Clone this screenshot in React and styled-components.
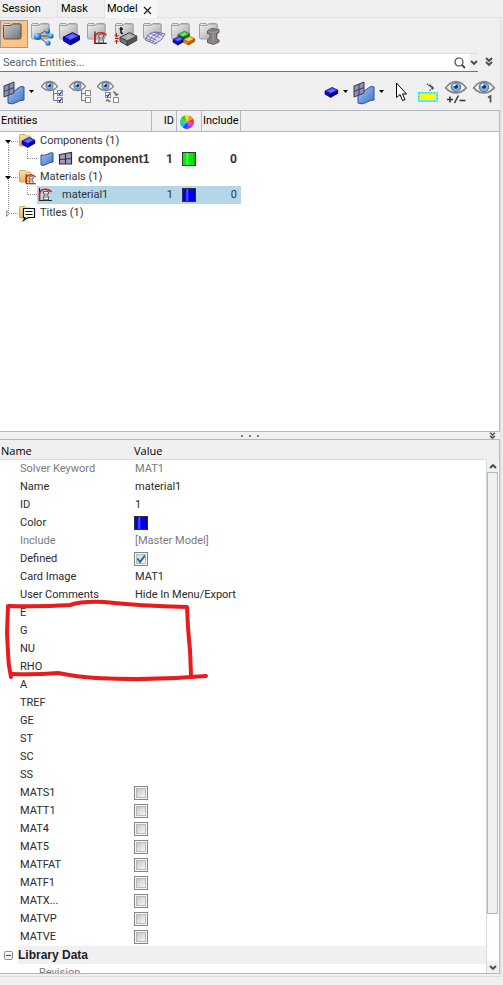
import { useState } from 'react'
import styled, { createGlobalStyle } from 'styled-components'

const Global = createGlobalStyle`
  * { box-sizing: border-box; }
  body {
    margin: 0;
    background: #f0f0f0;
    color: #1e1e1e;
    font-family: Roboto, "Liberation Sans", sans-serif;
    font-size: 11px;
    line-height: 18px;
  }
  button, input { font: inherit; color: inherit; }
  svg { display: block; flex: none; overflow: visible; }
`

const Page = styled.div`
  display: flex;
  flex-direction: column;
  height: 100vh;
  padding: 0 1px 8px 0;
`
const Tabs = styled.div`
  display: flex;
  height: 18px;
`
const Tab = styled.button`
  border: 0;
  border-right: ${p => p.$active ? 0 : 1}px solid #e2e2e2;
  border-bottom: 1px solid ${p => p.$active ? '#f8f8f8' : '#e2e2e2'};
  background: ${p => p.$active ? '#f8f8f8' : 'none'};
  min-width: ${p => p.$w}px;
  padding: 0 0 0 ${p => p.$pad || 2}px;
  color: #000;
  line-height: 17px;
  text-align: left;
`
const ActiveTab = styled.div`
  display: flex;
  align-items: center;
  background: #f8f8f8;
  padding-right: 4px;
`
const CloseButton = styled.button`
  border: 0;
  background: none;
  padding: 2px 1px 0;
`
const TabSpace = styled.div`
  flex: 1;
  border-bottom: 1px solid #e2e2e2;
`
const Frame = styled.div`
  flex: 1;
  min-height: 0;
  display: flex;
  flex-direction: column;
  border-right: 2px solid #e4e4e4;
  border-bottom: 1px solid #dcdcdc;
  padding-bottom: 2px;
`
const ViewBar = styled.div`
  display: flex;
  height: 35px;
  padding-top: 2px;
`
const ViewButton = styled.button`
  width: 28px;
  height: 28px;
  padding: 0;
  border: 1px solid ${p => p.$on ? '#9a9a9a' : 'transparent'};
  background: ${p => p.$on ? '#ffc483' : 'none'};
`
const SearchRow = styled.div`
  display: flex;
  height: 19px;
`
const SearchField = styled.div`
  flex: 1;
  display: flex;
  align-items: center;
  background: #fff;
  border-top: 1px solid #dcdcdc;
  border-bottom: 1px solid #757575;
`
const SearchInput = styled.input`
  flex: 1;
  min-width: 0;
  border: 0;
  outline: 0;
  background: none;
  padding: 0 3px;
  line-height: 16px;
  &::placeholder { color: #606060; opacity: 1; }
`
const SmallButton = styled.button`
  display: flex;
  align-items: center;
  justify-content: center;
  border: 0;
  padding: 0;
  width: ${p => p.$w}px;
  height: 17px;
  background: ${p => p.$filled ? '#f0f0f0' : 'none'};
`
const ToolBar = styled.div`
  display: flex;
  align-items: center;
  justify-content: space-between;
  height: 38px;
  padding: 2px 4px 0 2px;
`
const ToolGroup = styled.div`
  display: flex;
  align-items: center;
  gap: ${p => p.$gap || 4}px;
`
const ToolButton = styled.button`
  display: flex;
  align-items: center;
  justify-content: center;
  width: ${p => p.$w || 24}px;
  height: 26px;
  border: 0;
  padding: 0;
  background: none;
`
const TreePane = styled.div`
  flex: none;
  height: 322px;
  background: #fff;
  border: 1px solid #b0b8c0;
  border-left: 0;
`
const TreeTable = styled.table`
  width: 100%;
  table-layout: fixed;
  border-spacing: 0;
  font-size: 11px;
`
const TreeHead = styled.th`
  width: ${p => p.$w ? p.$w + 'px' : 'auto'};
  height: 21px;
  padding: 0 2px 0 1px;
  background: #f0f0f0;
  border-bottom: 1px solid #b0b8c0;
  border-right: ${p => p.$w ? '1px solid #b0b8c0' : '0'};
  color: #000;
  font-weight: normal;
  text-align: ${p => p.$align || 'left'};
`
const TreeCell = styled.td`
  height: 18px;
  padding: ${p => p.$align === 'right' ? '0 4px' : '0'};
  background: ${p => p.$selected ? '#b4d6e9' : 'none'};
  color: #333;
  font-size: ${p => p.$bold ? 12 : 11}px;
  font-weight: ${p => p.$bold ? 'bold' : 'normal'};
  text-align: ${p => p.$align || 'left'};
`
const TreeName = styled.div`
  display: flex;
  height: 18px;
`
const TreeLabel = styled.div`
  flex: 1;
  display: flex;
  align-items: center;
  gap: ${p => p.$gap || 4}px;
  background: ${p => p.$selected ? '#b4d6e9' : 'none'};
  font-family: ${p => p.$bold ? '"Liberation Sans", sans-serif' : 'inherit'};
  font-size: ${p => p.$bold ? 12 : 11}px;
  font-weight: ${p => p.$bold ? 'bold' : 'normal'};
  white-space: nowrap;
`
const Swatch = styled.span`
  display: block;
  width: 14px;
  height: 14px;
  margin-left: ${p => p.$inset || 0}px;
  border: 1px solid #333;
  background: linear-gradient(90deg, ${p => p.$color} 20%, ${p => p.$light} 35%, ${p => p.$color} 50%, ${p => p.$color} 80%, ${p => p.$dark});
`
const Splitter = styled.div`
  display: grid;
  grid-template-columns: 1fr auto 1fr;
  align-items: center;
  flex: none;
  height: 7px;
`
const Dots = styled.div`
  display: flex;
  gap: 6px;
  grid-column: 2;
`
const Dot = styled.i`
  width: 2px;
  height: 2px;
  background: #7a7a7a;
`
const SplitButton = styled.button`
  justify-self: end;
  border: 0;
  padding: 0 4px 0 0;
  background: none;
`
const PropPane = styled.div`
  flex: 1;
  min-height: 0;
  display: flex;
  overflow: hidden;
  border: 1px solid #b0b8c0;
  border-left: 0;
`
const PropBody = styled.div`
  position: relative;
  flex: 1;
  min-width: 0;
  height: 100%;
  overflow: hidden;
  background: #fff;
`
const PropTable = styled.table`
  width: 100%;
  table-layout: fixed;
  border-spacing: 0;
  font-size: 11px;
`
const PropHead = styled.th`
  width: ${p => p.$w ? p.$w + 'px' : 'auto'};
  height: 20px;
  padding: 3px 0 0 1px;
  line-height: 16px;
  background: #f0f0f0;
  border-bottom: 1px solid #d3dde4;
  color: #000;
  font-family: "Open Sans", sans-serif;
  font-weight: normal;
  text-align: left;
`
const PropCell = styled.td`
  height: 18px;
  padding: 0 0 0 ${p => p.$pad}px;
  color: ${p => p.$dim ? '#7a7a7a' : '#2a2a2a'};
  white-space: nowrap;
`
const GroupCell = styled.td`
  height: 18px;
  padding: 0;
  background: #f0f0f0;
  font-family: "Liberation Sans", sans-serif;
  font-size: 12px;
  font-weight: bold;
`
const GroupTitle = styled.div`
  display: flex;
`
const Expander = styled.button`
  display: flex;
  align-items: center;
  justify-content: center;
  width: 18px;
  height: 18px;
  border: 0;
  padding: 0 1px 0 0;
  background: #fff;
`
const Check = styled.input`
  appearance: none;
  display: block;
  width: 14px;
  height: 14px;
  margin: 0;
  border: 1px solid #868686;
  box-shadow: inset 0 0 0 1px #f6f6f6, inset 0 0 0 2px #b5b9be;
  background: linear-gradient(135deg, #b4bac4, #f4f4f4 80%);
  &:checked {
    background: url("data:image/svg+xml,%3Csvg xmlns='http://www.w3.org/2000/svg' viewBox='0 0 12 12'%3E%3Cpath d='M2.5 5.5L5 9L10 2.5' fill='none' stroke='%231b6f9c' stroke-width='2'/%3E%3C/svg%3E"),
      linear-gradient(135deg, #c5cad2, #f8f8f8 80%);
  }
`
const ScrollBar = styled.div`
  display: flex;
  flex-direction: column;
  width: 13px;
  margin-top: 20px;
  padding-right: 1px;
  background: #fff;
  border-left: 1px solid #d3dbe2;
`
const ScrollThumb = styled.div`
  height: 442px;
  border: 1px solid #b0b8c0;
  background: #f0f0f0;
`
const ScrollSpace = styled.div`
  flex: 1;
`
const ScrollButton = styled.button`
  display: flex;
  align-items: center;
  justify-content: center;
  flex: none;
  height: 12px;
  border: 0;
  padding: 0;
  background: #f0f0f0;
`
// pen mark laid over the rows E .. RHO
const Marker = styled.svg`
  position: absolute;
  left: 0;
  top: 155px;
  pointer-events: none;
`
const WheelIcon = styled.svg`
  margin: 2px 0 0 2px;
`
const HiddenDefs = styled.svg`
  position: absolute;
`

const Defs = () => (
  <HiddenDefs width="0" height="0">
    <defs>
      <linearGradient id="steel" x1="0" y1="0" x2="1" y2="1">
        <stop offset="0" stopColor="#f4f4f4" /><stop offset=".5" stopColor="#cacaca" /><stop offset="1" stopColor="#a0a0a0" />
      </linearGradient>
      <linearGradient id="steelDark" x1="0" y1="0" x2="1" y2="1">
        <stop offset="0" stopColor="#d0d0d0" /><stop offset="1" stopColor="#6f6f6f" />
      </linearGradient>
      <linearGradient id="surf" x1="0" y1="0" x2="1" y2="1">
        <stop offset="0" stopColor="#a4c4f0" /><stop offset="1" stopColor="#4174c4" />
      </linearGradient>
      <linearGradient id="gold" x1="0" y1="0" x2="0" y2="1">
        <stop offset="0" stopColor="#fbe3a4" /><stop offset="1" stopColor="#e4b45c" />
      </linearGradient>
      <radialGradient id="ball" cx=".35" cy=".3" r=".8">
        <stop offset="0" stopColor="#b8e4ff" /><stop offset=".5" stopColor="#2a8ae6" /><stop offset="1" stopColor="#0b3f98" />
      </radialGradient>
    </defs>
  </HiddenDefs>
)

const Folder = ({ dark }) => (
  <g>
    <path d="M3.500 17V5q0-1.500 1.500-1.500H10l1.500 2L13 3.500H19.500q1.500 0 1.500 1.500V16"
      fill="url(#steel)" stroke="#8a8a8a" strokeWidth=".8" />
    <path d="M3.500 6.500q0-1 1-1H11l1.500-1.500H20q1 0 1 1V17.500q0 1.500-1.500 1.500H5q-1.500 0-1.500-1.500Z"
      fill={dark ? 'url(#steelDark)' : 'url(#steel)'} stroke={dark ? '#555' : '#a0a0a0'} />
  </g>
)

const Cube = ({ x = 0, y = 0, s = 1, top = '#4a4aff', left = '#0a0ad0', right = '#0000a0', line = '#00007c' }) => (
  <g transform={`translate(${x} ${y}) scale(${s})`} stroke={line} strokeWidth=".9" strokeLinejoin="round">
    <path d="M0 5v4l7 4V8.500Z" fill={left} />
    <path d="M16 4v4l-9 5V8.500Z" fill={right} />
    <path d="M0 5L9 0.500L16 4L7 8.500Z" fill={top} />
    <path d="M4 5L9 2.500L12.500 4.200L7.200 6.800Z" fill="#fff" fillOpacity=".22" stroke="none" />
  </g>
)

const Curve = ({ x = 0, y = 0, s = 1 }) => (
  <g transform={`translate(${x} ${y}) scale(${s})`} fill="none">
    <path d="M1.500 0V12.500H14" stroke="#222" strokeWidth="1.200" />
    <path d="M1.500 12V6Q2 1.500 7 1.200Q11 1 13.500 4" stroke="#e51414" strokeWidth="1.600" />
    <path d="M5.500 3.500h5v2.500l-1.500 1.300 1.500 1.300V12h-5V8.600L7 7.300 5.500 6Z" fill="#b4b4b4" stroke="#444" strokeWidth=".8" />
    <path d="M6.500 4.500h3M6.500 10.500h3" stroke="#f8f8f8" />
  </g>
)

const viewIcons = {
  'Model view': <Folder dark />,
  'Assembly': <>
    <Folder />
    <path d="M9 16L17 11M9 16H20M9 16L19 23" stroke="#555" />
    <circle cx="9.500" cy="16.500" r="3.600" fill="url(#ball)" />
    <circle cx="19.500" cy="11" r="2.600" fill="url(#ball)" />
    <circle cx="23" cy="16" r="2.600" fill="url(#ball)" />
    <circle cx="20" cy="23" r="2.600" fill="url(#ball)" />
  </>,
  'Components': <><Folder /><Cube x="7.500" y="12" /></>,
  'Materials': <><Folder /><Curve x="9.500" y="11.500" s=".95" /></>,
  'Properties': <>
    <Folder />
    <path d="M9 7v5q0 1.500 2 1.500M7.500 9h3.500" fill="none" stroke="#111" strokeWidth="1.500" />
    <path d="M4.500 13v4M2.500 15l2 2L6.500 15M3 18.500h3.500M4.500 20v4M2.500 22l2-2L6.500 22" stroke="#c01818" fill="none" />
    <Cube x="8" y="12" s="1.050" top="#a6a6a6" left="#747474" right="#585858" line="#3c3c3c" />
  </>,
  'Mesh': <>
    <Folder />
    <path d="M5.500 20Q8 12 16 12L25 14Q23 20 15 24Z" fill="#e8e8f8" fillOpacity=".75" stroke="#6868ac" />
    <path d="M7.500 16l9.500 4.500M10.500 13.500l9 4M14 12l9 4M9.500 21.500Q11 14 20 13M12.500 22.500Q15 15 23 13.500M6.500 18.500l9.500 4" fill="none" stroke="#6868ac" strokeWidth=".8" />
  </>,
  'Blocks': <>
    <Folder />
    <Cube x="10" y="11" s=".72" top="#4adc4a" left="#14a414" right="#0c7c0c" line="#0a640a" />
    <Cube x="5" y="16" s=".7" />
    <Cube x="15.500" y="16" s=".7" top="#ffb84c" left="#e88c14" right="#b86404" line="#8c4c04" />
  </>,
  'Sections': <>
    <Folder />
    <path d="M11.500 11l4-2.500 7.500 1v3l-2.500 1.500v4.500l2.500 1.500v2L17.500 24.500 11.500 22.500v-3l2.500-1.500v-4L11.500 13.500Z" fill="#8c8282" stroke="#625a5a" />
    <path d="M12 11.500l5.500 1.500 5-2.500M17.500 13.500v10" fill="none" stroke="#aca2a2" strokeWidth=".8" />
  </>,
}

const Surface = () => (
  <svg width="22" height="23" viewBox="0 0 22 23">
    <path d="M5 9q5 3 9-1t7-2v13q-4 0-8 2.500T5 22Z" fill="url(#surf)" stroke="#27519c" />
    <path d="M1 5L11 1v11L1 16Z" fill="#8f8fb4" stroke="#3a3a5c" />
    <path d="M6 3v11M1 10.500L11 6.500" stroke="#3a3a5c" />
  </svg>
)

const Eye = () => (
  <g>
    <path d="M.5 5.500Q4 .5 8.500 .5T16.500 5.500Q13 9.500 8.500 9.500T.5 5.500Z" fill="#f2f2f2" stroke="#858585" strokeWidth="1.300" />
    <circle cx="8.500" cy="4.800" r="3.700" fill="#86ace2" stroke="#54709c" strokeWidth=".8" />
    <circle cx="8.500" cy="4.500" r="1.600" fill="#173468" />
    <circle cx="7.300" cy="3.300" r=".9" fill="#fff" />
  </g>
)

const Box = ({ x, y, on }) => (
  <g>
    <rect x={x} y={y} width="5" height="5" fill="#fff" stroke="#8c8c8c" />
    {on && <path d={`M${x + 1} ${y + 2.5}l1.200 1.500 2-3`} fill="none" stroke="#0a1ec8" strokeWidth="1.200" />}
  </g>
)

const EyeTree = ({ on }) => (
  <svg width="23" height="23" viewBox="0 0 23 23">
    <Eye />
    <path d="M12.500 9v10.500H16M12.500 12.500H16" fill="none" stroke="#777" />
    <Box x={16.5} y={9.5} on={on} />
    <Box x={16.5} y={16.5} on={on} />
  </svg>
)

const EyeSwap = () => (
  <svg width="23" height="23" viewBox="0 0 23 23">
    <Eye />
    <Box x={8.5} y={11.5} on />
    <Box x={16.5} y={16.5} />
    <path d="M16 11q3 0 3.500 3M17.500 12.500l2 2 2-2M13.500 20.500q-2.500 0-3-1.500M9 20l1.500-1.500 2 1.500" fill="none" stroke="#777" strokeWidth="1.300" />
  </svg>
)

const BigEye = ({ children }) => (
  <svg width="22" height="23" viewBox="0 0 22 23">
    <g transform="scale(1.290 1.250)"><Eye /></g>
    {children}
  </svg>
)

const Caret = () => <svg width="6" height="4"><path d="M0 0h5L2.500 3Z" fill="#000" /></svg>
const CaretButton = ({ label }) => <ToolButton $w={8} aria-label={label}><Caret /></ToolButton>

const Chevrons = ({ double, up, small }) => (
  <svg width={small ? 7 : 8} height={double ? (small ? 7 : 9) : 5} viewBox={double ? '0 0 8 9' : '0 0 8 5'}>
    <path d={up ? 'M1 4L4 1.200L7 4' : 'M1 1L4 3.800L7 1'} fill="none" stroke="#505050" strokeWidth="2" />
    {double && <path d="M1 5L4 7.800L7 5" fill="none" stroke="#505050" strokeWidth="2" />}
  </svg>
)

const Branch = ({ first, last, closed }) => (
  <svg width="19" height="18">
    <path d={`M8.500 ${first ? 9 : 0}V${last ? 9 : 18}`} stroke="#909090" strokeDasharray="1 1" />
    <path d="M9 9.500H19" stroke="#909090" strokeDasharray="1 1" />
    {closed
      ? <path d="M6.500 6.500v6L9.500 9.500Z" fill="#ddd" stroke="#999" />
      : <path d="M5 8h6L8 11.500Z" fill="#000" />}
  </svg>
)
const Twig = () => (
  <svg width="37" height="18">
    <path d="M8.500 0V18M27.500 0V9M28 8.500H37" fill="none" stroke="#909090" strokeDasharray="1 1" />
  </svg>
)

const GoldFolder = ({ children }) => (
  <svg width="17" height="18" viewBox="0 0 17 18">
    <path d="M.5 13V3.500q0-1 1-1H6L7.500 4H11q1 0 1 1v8q0 1-1 1H1.500q-1 0-1-1Z" fill="url(#gold)" stroke="#c4984c" strokeWidth=".8" />
    {children}
  </svg>
)

const Wheel = () => (
  <WheelIcon width="14" height="14" viewBox="-7 -7 14 14">
    {['#ff3030', '#ff30c0', '#8a40f0', '#3040ff', '#20b8f0', '#20d890', '#30d020', '#f0e020', '#ff9020'].map((color, i) => (
      <path key={color} d="M0 0L0-7A7 7 0 0 1 4.600-5.300Z" fill={color} transform={`rotate(${i * 40 + 60})`} />
    ))}
  </WheelIcon>
)

const blue = { $color: '#0000f0', $light: '#5c5cff', $dark: '#000090' }
const green = { $color: '#0ce80c', $light: '#5cff5c', $dark: '#08a808' }

const props = [
  ['Solver Keyword', 'MAT1', true],
  ['Name', 'material1'],
  ['ID', '1'],
  ['Color', 'swatch'],
  ['Include', '[Master Model]', true],
  ['Defined', true],
  ['Card Image', 'MAT1'],
  ['User Comments', 'Hide In Menu/Export'],
  ...['E', 'G', 'NU', 'RHO', 'A', 'TREF', 'GE', 'ST', 'SC', 'SS'].map(n => [n, '']),
  ...['MATS1', 'MATT1', 'MAT4', 'MAT5', 'MATFAT', 'MATF1', 'MATX...', 'MATVP', 'MATVE'].map(n => [n, false]),
]

function PropRow({ name, value, dim }) {
  const isCheck = typeof value === 'boolean'
  const id = 'prop-' + name
  return (
    <tr>
      <PropCell $pad={20} $dim={dim}>{isCheck ? <label htmlFor={id}>{name}</label> : name}</PropCell>
      <PropCell $pad={isCheck || value === 'swatch' ? 1 : 2} $dim={dim}>
        {isCheck && <Check id={id} type="checkbox" defaultChecked={value} />}
        {value === 'swatch' && <Swatch {...blue} />}
        {!isCheck && value !== 'swatch' && value}
      </PropCell>
    </tr>
  )
}

export default function App() {
  const [view, setView] = useState('Model view')

  return (
    <Page>
      <Global />
      <Defs />
      <Tabs>
        <Tab $w={58}>Session</Tab>
        <Tab $w={47} $pad={3}>Mask</Tab>
        <ActiveTab>
          <Tab $active $w={37}>Model</Tab>
          <CloseButton aria-label="Close Model">
            <svg width="9" height="9"><path d="M1 1l7 7M8 1L1 8" stroke="#222" strokeWidth="1.300" /></svg>
          </CloseButton>
        </ActiveTab>
        <TabSpace />
      </Tabs>
      <Frame>
        <ViewBar>
          {Object.keys(viewIcons).map(name => (
            <ViewButton key={name} aria-label={name} $on={view === name} onClick={() => setView(name)}>
              <svg width="26" height="26" viewBox="1 1 26 26">{viewIcons[name]}</svg>
            </ViewButton>
          ))}
        </ViewBar>
        <SearchRow>
          <SearchField>
            <SearchInput placeholder="Search Entities..." aria-label="Search Entities" />
            <SmallButton $w={18} aria-label="Search">
              <svg width="12" height="12"><circle cx="5" cy="5" r="4" fill="none" stroke="#444" strokeWidth="1.200" /><path d="M8 8l3 3" stroke="#444" strokeWidth="1.800" /></svg>
            </SmallButton>
            <SmallButton $w={9} $filled aria-label="Search options"><Chevrons /></SmallButton>
          </SearchField>
          <SmallButton $w={22} aria-label="More"><Chevrons double /></SmallButton>
        </SearchRow>
        <ToolBar>
          <ToolGroup>
            <ToolGroup $gap={2}>
              <ToolButton aria-label="Geometry and mesh"><Surface /></ToolButton>
              <CaretButton label="Geometry options" />
            </ToolGroup>
            <ToolButton aria-label="Show all"><EyeTree on /></ToolButton>
            <ToolButton aria-label="Show none"><EyeTree /></ToolButton>
            <ToolButton aria-label="Show reverse"><EyeSwap /></ToolButton>
          </ToolGroup>
          <ToolGroup>
            <ToolGroup $gap={2}>
              <ToolButton $w={16} aria-label="Component"><svg width="14" height="11"><Cube s=".8" /></svg></ToolButton>
              <CaretButton label="Component options" />
              <ToolButton aria-label="Display"><Surface /></ToolButton>
              <CaretButton label="Display options" />
            </ToolGroup>
            <ToolButton $w={22} aria-label="Select">
              <svg width="12" height="20"><path d="M1.500 1v14.500l3.500-3 2.500 6 2.500-1-2.500-5.500H11.500Z" fill="#fff" stroke="#000" /></svg>
            </ToolButton>
            <ToolButton aria-label="Highlight">
              <svg width="20" height="19">
                <rect x="1" y="10" width="18" height="8" fill="#ffff00" stroke="#d8fbff" strokeWidth="2" />
                <rect x=".5" y="9.500" width="19" height="9" fill="none" stroke="#00dcf4" strokeDasharray="2 1" />
                <rect x="1.500" y="10.500" width="17" height="7" fill="none" stroke="#00dcf4" strokeDasharray="1 1" />
                <path d="M9 1l6 4-4 3M12 2l4 4" fill="none" stroke="#444" strokeWidth="1.800" strokeDasharray="1 1" />
              </svg>
            </ToolButton>
            <ToolButton aria-label="Show or hide">
              <BigEye><path d="M2 18.500h6M5 15.500v6M9.500 22l4-7.500M14.500 19.500h6" stroke="#333" strokeWidth="1.500" /></BigEye>
            </ToolButton>
            <ToolButton aria-label="Isolate">
              <BigEye><path d="M15 16.500l2.500-1.500v6.500" fill="none" stroke="#555" strokeWidth="1.800" /></BigEye>
            </ToolButton>
          </ToolGroup>
        </ToolBar>
        <TreePane>
          <TreeTable>
            <thead>
              <tr>
                <TreeHead $w={152}>Entities</TreeHead>
                <TreeHead $w={25} $align="right">ID</TreeHead>
                <TreeHead $w={25} aria-label="Color"><Wheel /></TreeHead>
                <TreeHead $w={39} $align="right">Include</TreeHead>
                <TreeHead />
              </tr>
            </thead>
            <tbody>
              <tr>
                <TreeCell colSpan={4}>
                  <TreeName><Branch first /><TreeLabel><GoldFolder><Cube x="3" y="5" s=".8" /></GoldFolder>Components (1)</TreeLabel></TreeName>
                </TreeCell>
              </tr>
              <tr>
                <TreeCell>
                  <TreeName>
                    <Twig />
                    <TreeLabel $bold>
                      <svg width="17" height="16" viewBox="-3 0 17 16"><path d="M1 4q4 1 7-1t5-1v9q-3 0-6 2t-6 1Z" fill="url(#surf)" stroke="#27519c" /></svg>
                      <svg width="16" height="16"><path d="M1.500 3.500L13.500 1.500V13H1.500ZM7.500 2.500V13M1.500 8.500L13.500 7.500" fill="#a0a0bc" stroke="#2c2c44" strokeWidth="1.200" /></svg>
                      component1
                    </TreeLabel>
                  </TreeName>
                </TreeCell>
                <TreeCell $align="right" $bold>1</TreeCell>
                <TreeCell><Swatch {...green} $inset={5} /></TreeCell>
                <TreeCell $align="right" $bold>0</TreeCell>
              </tr>
              <tr>
                <TreeCell colSpan={4}>
                  <TreeName><Branch /><TreeLabel><GoldFolder><Curve x="6" y="6" s=".78" /></GoldFolder>Materials (1)</TreeLabel></TreeName>
                </TreeCell>
              </tr>
              <tr>
                <TreeCell>
                  <TreeName>
                    <Twig />
                    <TreeLabel $selected $gap={8}>
                      <svg width="17" height="16"><Curve x="1" y="1" /></svg>
                      material1
                    </TreeLabel>
                  </TreeName>
                </TreeCell>
                <TreeCell $align="right" $selected>1</TreeCell>
                <TreeCell $selected><Swatch {...blue} $inset={5} /></TreeCell>
                <TreeCell $align="right" $selected>0</TreeCell>
              </tr>
              <tr>
                <TreeCell colSpan={4}>
                  <TreeName>
                    <Branch last closed />
                    <TreeLabel>
                      <GoldFolder><path d="M4.500 4.500H15.500V13.500H9L4.500 16.500L6 13.500H4.500Z" fill="#fff" stroke="#111" strokeWidth="1.200" /><path d="M6.500 7.500h7M6.500 10.500h7" stroke="#111" /></GoldFolder>
                      Titles (1)
                    </TreeLabel>
                  </TreeName>
                </TreeCell>
              </tr>
            </tbody>
          </TreeTable>
        </TreePane>
        <Splitter>
          <Dots><Dot /><Dot /><Dot /></Dots>
          <SplitButton aria-label="Collapse"><Chevrons double small /></SplitButton>
        </Splitter>
        <PropPane>
          <PropBody>
            <PropTable>
              <thead>
                <tr>
                  <PropHead $w={133}>Name</PropHead>
                  <PropHead>Value</PropHead>
                </tr>
              </thead>
              <tbody>
                {props.map(([name, value, dim]) => <PropRow key={name} name={name} value={value} dim={dim} />)}
                <tr>
                  <GroupCell colSpan={2}>
                    <GroupTitle>
                      <Expander aria-label="Collapse Library Data">
                        <svg width="9" height="9"><rect x=".5" y=".5" width="8" height="8" rx="1" fill="#f4f4f4" stroke="#8c8c8c" /><path d="M2 4.500h5" stroke="#2c4c94" /></svg>
                      </Expander>
                      Library Data
                    </GroupTitle>
                  </GroupCell>
                </tr>
                <tr><PropCell $pad={39} $dim>Revision</PropCell></tr>
              </tbody>
            </PropTable>
            <Marker width="215" height="90" viewBox="0 595 215 90" fill="none" stroke="#e81c1c" strokeWidth="4" strokeLinecap="round" strokeLinejoin="round">
              <path d="M11 677Q8 664 8 652L7 633L8 606Q40 607 70 605Q82 601 104 602Q140 606 187 607Q188 632 190 650L191 675" />
              <path d="M12 674Q35 675 58 673Q78 677 96 678Q150 681 206 676" />
            </Marker>
          </PropBody>
          <ScrollBar>
            <ScrollButton aria-label="Scroll up"><Chevrons up /></ScrollButton>
            <ScrollThumb />
            <ScrollSpace />
            <ScrollButton aria-label="Scroll down"><Chevrons /></ScrollButton>
          </ScrollBar>
        </PropPane>
      </Frame>
    </Page>
  )
}
